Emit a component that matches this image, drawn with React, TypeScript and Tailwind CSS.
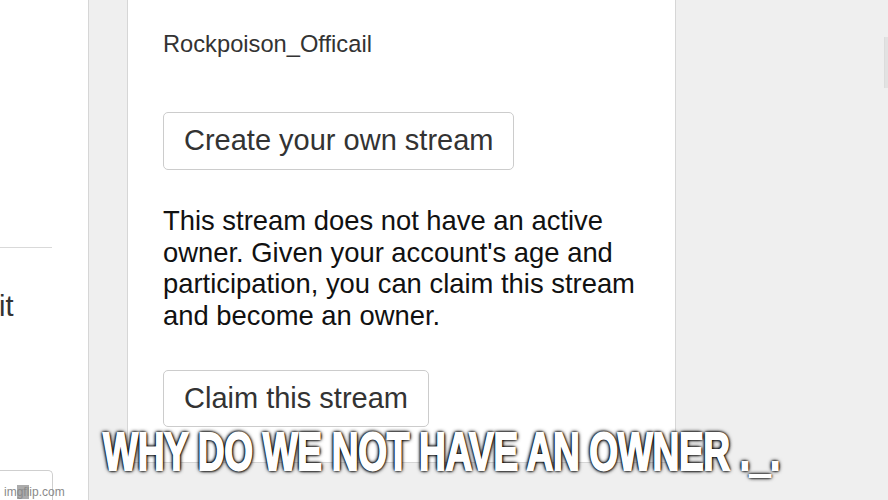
import React from "react";

export default function App() {
  return (
    <div className="relative flex w-[888px] h-[500px] overflow-hidden bg-[#efefef] font-['Liberation_Sans',Arial,sans-serif]">
      {/* left panel */}
      <div className="flex flex-col w-[89px] h-[500px] bg-white border-r border-[#d6d6d6] overflow-hidden shrink-0">
        <div className="h-[247px] shrink-0" />
        <div className="w-[52px] h-[1px] bg-[#d9d9d9] shrink-0" />
        <div className="mt-[42px] -ml-[1px] text-[29px] leading-[33px] text-[#333]">it</div>
        <div className="mt-auto w-[53px] h-[30px] border-t border-r border-[#cfcfcf] rounded-tr-[5px] shrink-0" />
      </div>

      {/* gutter */}
      <div className="w-[38px] shrink-0" />

      {/* card */}
      <div className="w-[549px] h-[463px] shrink-0 bg-white border-x border-b border-[#d6d6d6] pl-[35px] flex flex-col items-start">
        <div className="mt-[31px] text-[23.7px] leading-[27px] text-[#333]">Rockpoison_Officail</div>
        <button className="mt-[54px] h-[58px] px-[20px] flex items-center bg-white border border-[#cccccc] rounded-[5px] text-[29px] text-[#333]">
          Create your own stream
        </button>
        <p className="mt-[35px] w-[500px] text-[27.4px] leading-[31.5px] text-[#111]">
          This stream does not have an active owner. Given your account's age and participation, you can claim this stream and become an owner.
        </p>
        <button className="mt-[39px] h-[57px] px-[20px] flex items-center bg-white border border-[#cccccc] rounded-[5px] text-[29px] text-[#333]">
          Claim this stream
        </button>
      </div>

      {/* right area */}
      <div className="flex-1 flex justify-end">
        <div className="mt-[37px] w-[4px] h-[51px] bg-[#e2e2e2] border-l border-[#dcdcdc]" />
      </div>

      {/* meme caption */}
      <div className="absolute left-[103px] top-[425px] whitespace-nowrap origin-left scale-x-[0.7] text-[53px] leading-[53px] font-bold text-white tracking-[-0.5px] [-webkit-text-stroke:2px_#fff] [text-shadow:0_0_2px_#000,0_0_2px_#000,0_0_3px_#000,0_0_3px_#000,1px_1px_4px_#000,-1px_-1px_4px_#000,0_0_6px_#000]">
        WHY DO WE NOT HAVE AN OWNER ._.
      </div>

      {/* watermark */}
      <div className="absolute left-[4px] bottom-[1px] text-[12px] leading-[14px] text-[#8a8a8a]">
        im<span className="bg-[#ababab]">gfl</span>ip.com
      </div>
    </div>
  );
}
